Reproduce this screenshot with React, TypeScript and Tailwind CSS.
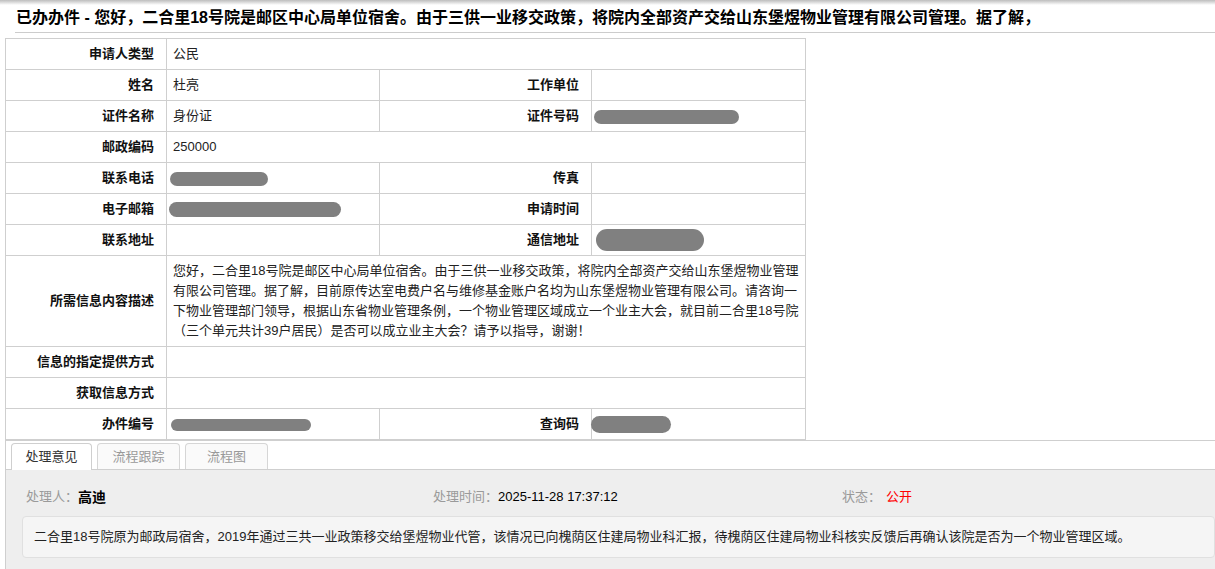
import React from "react";

const font = "font-['Liberation_Sans','Noto_Sans_CJK_SC',sans-serif]";

// grey smudge used where personal data is hidden
const Blot = ({ w, h = 14, className = "" }: { w: number; h?: number; className?: string }) => (
  <span
    className={`inline-block rounded-full bg-[#808080] align-middle ${className}`}
    style={{ width: w, height: h }}
  />
);

const Label = ({ children }: { children?: React.ReactNode }) => (
  <td className="border border-[#cfcfcf] pr-[12px] text-right font-bold text-[#111]">{children}</td>
);

const Value = ({ children, colSpan }: { children?: React.ReactNode; colSpan?: number }) => (
  <td colSpan={colSpan} className="border border-[#cfcfcf] pl-[6px] text-[#222]">
    {children}
  </td>
);

const App = () => {
  return (
    <div className={`${font} min-h-[569px] w-[1215px] overflow-hidden bg-white text-[13px]`}>
      <div className="h-[5px] bg-gradient-to-b from-[#bdbdbd] to-white" />
      <div className="ml-[15px] h-[28px] border-b border-[#cccccc] pt-px pl-px text-[16px] leading-[24px] font-bold text-black">
        已办办件 - 您好，二合里18号院是邮区中心局单位宿舍。由于三供一业移交政策，将院内全部资产交给山东堡煜物业管理有限公司管理。据了解，
      </div>

      <table className="mt-[5px] ml-[5px] w-[800px] table-fixed border-collapse">
        <colgroup>
          <col className="w-[161px]" />
          <col className="w-[213px]" />
          <col className="w-[212px]" />
          <col className="w-[214px]" />
        </colgroup>
        <tbody>
          <tr className="h-[31px]">
            <Label>申请人类型</Label>
            <Value colSpan={3}>公民</Value>
          </tr>
          <tr className="h-[31px]">
            <Label>姓名</Label>
            <Value>杜亮</Value>
            <Label>工作单位</Label>
            <Value />
          </tr>
          <tr className="h-[31px]">
            <Label>证件名称</Label>
            <Value>身份证</Value>
            <Label>证件号码</Label>
            <Value>
              <Blot w={145} className="-ml-[4px]" />
            </Value>
          </tr>
          <tr className="h-[31px]">
            <Label>邮政编码</Label>
            <Value colSpan={3}>250000</Value>
          </tr>
          <tr className="h-[31px]">
            <Label>联系电话</Label>
            <Value>
              <Blot w={98} className="-ml-[3px]" />
            </Value>
            <Label>传真</Label>
            <Value />
          </tr>
          <tr className="h-[31px]">
            <Label>电子邮箱</Label>
            <Value>
              <Blot w={172} h={15} className="-ml-[4px]" />
            </Value>
            <Label>申请时间</Label>
            <Value />
          </tr>
          <tr className="h-[31px]">
            <Label>联系地址</Label>
            <Value />
            <Label>通信地址</Label>
            <Value>
              <Blot w={108} h={22} className="-ml-[2px] rounded-[6px]" />
            </Value>
          </tr>
          <tr className="h-[91px]">
            <Label>所需信息内容描述</Label>
            <Value colSpan={3}>
              <p className="py-[3px] pr-[4px] leading-[20px]">
                您好，二合里18号院是邮区中心局单位宿舍。由于三供一业移交政策，将院内全部资产交给山东堡煜物业管理
                <br />
                有限公司管理。据了解，目前原传达室电费户名与维修基金账户名均为山东堡煜物业管理有限公司。请咨询一
                <br />
                下物业管理部门领导，根据山东省物业管理条例，一个物业管理区域成立一个业主大会，就目前二合里18号院
                <br />
                （三个单元共计39户居民）是否可以成立业主大会？请予以指导，谢谢！
              </p>
            </Value>
          </tr>
          <tr className="h-[31px]">
            <Label>信息的指定提供方式</Label>
            <Value colSpan={3} />
          </tr>
          <tr className="h-[31px]">
            <Label>获取信息方式</Label>
            <Value colSpan={3} />
          </tr>
          <tr className="h-[31px]">
            <Label>办件编号</Label>
            <Value>
              <Blot w={140} h={12} className="-ml-[2px]" />
            </Value>
            <Label>查询码</Label>
            <Value>
              <Blot w={80} h={17} className="-ml-[7px] rounded-[8px]" />
            </Value>
          </tr>
        </tbody>
      </table>

      {/* tabs + opinion panel */}
      <div className="ml-[5px] border-t border-l border-[#cfcfcf]">
        <div className="flex h-[29px] items-end gap-[5px] border-b border-[#cfcfcf] pl-[5px]">
          <div className="-mb-px flex h-[27px] w-[81px] items-center justify-center rounded-t-[4px] border border-b-0 border-[#cfcfcf] bg-white text-[#333]">
            处理意见
          </div>
          <div className="flex h-[26px] w-[83px] items-center justify-center rounded-t-[4px] border border-b-0 border-[#d6d6d6] bg-[#fafafa] text-[#999]">
            流程跟踪
          </div>
          <div className="flex h-[26px] w-[83px] items-center justify-center rounded-t-[4px] border border-b-0 border-[#d6d6d6] bg-[#fafafa] text-[#999]">
            流程图
          </div>
        </div>
        <div className="h-[100px] bg-[#eeeeee] pt-[16px] pl-[16px]">
          <div className="flex h-[22px] items-center">
            <div className="flex w-[411px] items-center pl-[4px]">
              <span className="text-[#9a9a9a]">处理人：</span>
              <span className="text-[14px] font-bold text-black">高迪</span>
            </div>
            <div className="flex w-[409px] items-center">
              <span className="text-[#9a9a9a]">处理时间：</span>
              <span className="text-black">2025-11-28 17:37:12</span>
            </div>
            <div className="flex items-center">
              <span className="text-[#9a9a9a]">状态：</span>
              <span className="ml-[5px] text-[#ff0000]">公开</span>
            </div>
          </div>
          <div className="mt-[8px] flex h-[42px] items-center rounded-[4px] border border-[#e0e0e0] bg-[#f5f5f5] pl-[11px] text-[13px] text-[#222]">
            二合里18号院原为邮政局宿舍，2019年通过三共一业政策移交给堡煜物业代管，该情况已向槐荫区住建局物业科汇报，待槐荫区住建局物业科核实反馈后再确认该院是否为一个物业管理区域。
          </div>
        </div>
      </div>
    </div>
  );
};

export default App;
